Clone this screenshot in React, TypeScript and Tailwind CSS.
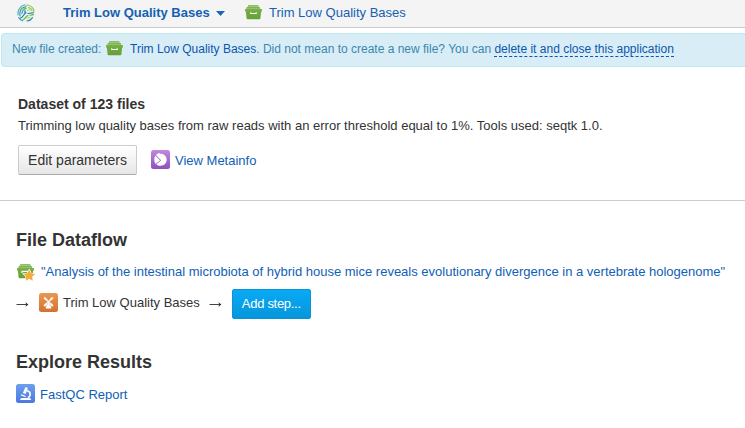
import React from 'react';

function BoxIcon({ starred = false }: { starred?: boolean }) {
  return (
    <svg className="block h-[20px] w-[20px] shrink-0" viewBox="0 0 20 20">
      <defs>
        <linearGradient id="box" x1="0" y1="0" x2="0" y2="1">
          <stop offset="0" stopColor="#78b045" />
          <stop offset="1" stopColor="#659f38" />
        </linearGradient>
      </defs>
      <path d="M3.800 3.200q.2-1 1.200-1h8.500q1 0 1.200 1l1.800 2.800H2z" fill="#a9cf8a" />
      <path d="M3.800 3.200q.2-1 1.200-1h8.500q1 0 1.200 1z" fill="#7fb453" />
      <path d="M2.200 5.400l.8-1.500h12.500l.8 1.500z" fill="#7fb453" />
      <path d="M1 6h17l-.4 3h-.5l-.7 6.200q-.1 1-1.100 1H3.700q-1 0-1.100-1L1.900 9h-.5z" fill="url(#box)" />
      {starred ? (
        <>
          <path d="M6 11V9.300h9" fill="none" stroke="#fff" strokeWidth="1.200" />
          <path d="M13.200 7.800l1.800 3.500 4 .6-2.900 2.800.7 4-3.600-1.900-3.600 1.900.7-4-2.900-2.800 4-.6z" fill="#f6aa3c" stroke="#fff" strokeWidth="1.200" paintOrder="stroke" />
        </>
      ) : (
        <path d="M6.800 9.200v1.300h5.400V9.200" fill="none" stroke="#fff" strokeWidth="1.100" />
      )}
    </svg>
  );
}

function Logo() {
  return (
    <svg className="block h-[18px] w-[18px]" viewBox="0 0 18 18" fill="none" strokeWidth="1.100" strokeLinecap="round">
      <circle cx="9" cy="9" r="8.700" fill="#e4f2ec" />
      <path d="M1 11C.4 6 3.500 1.600 8 .8" stroke="#45b5b4" />
      <path d="M3 12c-.8-4 .7-8 4.500-9M5 9.500c.3-3 1.500-4.500 4-5" stroke="#2b8fc0" />
      <path d="M10 1c3.500.3 6.500 3 7 6.300M11.500 3.500c2 .5 3 1.500 3.500 3" stroke="#8bc34a" />
      <path d="M3.500 14c3-1 3-4 5.500-5.300M11 9.500l5.500-.8M8 6.500V9" stroke="#1976b5" />
      <path d="M6 15.500c2.500-.5 2.500-3 5-4M13 11.200l3.500-.6M9 2l-1 2.500" stroke="#66ae4c" />
      <path d="M10 17c2-.2 4.500-1.500 5.500-3.500M1.700 13.700c1 1.600 2.500 2.600 4 3" stroke="#2b91bb" />
      <path d="M10.500 6.500l2.500-1M10 14l3-.7M5 6.500l1.500-2" stroke="#cbd53c" />
    </svg>
  );
}

function MetainfoIcon() {
  return (
    <svg className="block h-[19px] w-[19px] shrink-0" viewBox="0 0 19 19">
      <defs>
        <linearGradient id="meta" x1="0" y1="0" x2="0" y2="1">
          <stop offset="0" stopColor="#c488e0" />
          <stop offset="1" stopColor="#8d50bd" />
        </linearGradient>
      </defs>
      <rect width="19" height="19" rx="2.500" fill="url(#meta)" />
      <path d="M9.200 10.300L4.500 5.800C2.700 8 2.900 11.500 4.700 14z" fill="#fff" />
      <path d="M5 5.200C5.800 4 7 3.300 8.300 3.100l.5.700c3.800-.5 6.700 2.200 6.900 5.800 0 3.700-2.900 6.400-6.500 6.200-1.600 0-2.700-.5-3.900-1.500L10 10.300z" fill="#fff" />
      <path d="M4.700 5.400l5 4.900-4.800 3.900" fill="none" stroke="#a56bcb" strokeWidth=".5" />
    </svg>
  );
}

function MillIcon() {
  return (
    <svg className="block h-[19px] w-[19px] shrink-0" viewBox="0 0 19 19">
      <defs>
        <linearGradient id="mill" x1="0" y1="0" x2="0" y2="1">
          <stop offset="0" stopColor="#eb9850" />
          <stop offset="1" stopColor="#d27230" />
        </linearGradient>
      </defs>
      <rect width="19" height="19" rx="2.500" fill="url(#mill)" />
      <path d="M9.500 9l2 3.500 1 3H6.500l1-3z" fill="#fff" />
      <path d="M5 4.500l9 8.500M14 4.500L5 13" stroke="#fff" strokeWidth="1.200" />
      <path d="M6 3.700l2.700 2.700-1.500 1.500-2.800-2.700zM14.600 5.200l-2.800 2.700-1.500-1.500L13 3.700zM4.400 12.300l2.800-2.700 1.500 1.500L6 13.800zM13 13.800l-2.700-2.700 1.500-1.500 2.800 2.700z" fill="#fff" stroke="#d98040" strokeWidth=".3" />
    </svg>
  );
}

function MicroscopeIcon() {
  return (
    <svg className="block h-[19px] w-[19px] shrink-0" viewBox="0 0 19 19">
      <defs>
        <linearGradient id="scope" x1="0" y1="0" x2="0" y2="1">
          <stop offset="0" stopColor="#6ba0ed" />
          <stop offset="1" stopColor="#4c78df" />
        </linearGradient>
      </defs>
      <rect width="19" height="19" rx="2.500" fill="url(#scope)" />
      <path d="M9.500 3l2.400.9-2.300 6.200-2.700-1z" fill="#fff" />
      <path d="M11 6.800c3.900.8 4.200 5 1 6.900" fill="none" stroke="#fff" strokeWidth="1.600" />
      <path d="M5 10.800l4.700 1.700" stroke="#fff" strokeWidth="1.300" />
      <path d="M4 15.900q.3-1.800 2-1.800h7.200q1.700 0 2 1.800z" fill="#fff" />
    </svg>
  );
}

function Arrow() {
  return (
    <svg className="block h-[7px] w-[13px] shrink-0" viewBox="0 0 13 7">
      <path d="M.5 3.500h11" stroke="#444" />
      <path d="M9.500 1.300l2.900 2.200-2.900 2.200.6-2.200z" fill="#333" />
    </svg>
  );
}

export default function App() {
  return (
    <div className="h-[428px] w-[745px] overflow-hidden whitespace-nowrap bg-white font-['Liberation_Sans',Arial,sans-serif] text-[13px] leading-[20px] text-[#333]">
      <header className="flex h-[28px] items-center border-b border-[#ccc] bg-[#f4f4f4] pb-[2px] pl-[17px] text-[#1361b3]">
        <Logo />
        <span className="ml-[28px] w-[146px] font-bold">Trim Low Quality Bases</span>
        <svg className="ml-[7px] mt-[2px] h-[5px] w-[9px]" viewBox="0 0 9 5">
          <path d="M0 0h9L4.500 5z" fill="#1b67b5" />
        </svg>
        <span className="ml-[19px]"><BoxIcon /></span>
        <span className="ml-[5px]">Trim Low Quality Bases</span>
      </header>

      <div className="ml-px mt-[5px] flex h-[34px] items-center rounded-l-[4px] border border-r-0 border-[#bce8ee] bg-[#d9edf7] pb-[2px] pl-[10px] text-[12px] text-[#3a87ad]">
        <span className="w-[90px]">New file created:</span>
        <span className="ml-[3px]"><BoxIcon /></span>
        <span className="ml-[5px] text-[#0b57ad]">Trim Low Quality Bases</span>
        <span>. Did not mean to create a new file? You can&nbsp;</span>
        <a className="h-[16px] border-b border-dashed border-[#0b57ad] leading-[16px] text-[#0b57ad]">delete it and close this application</a>
      </div>

      <section className="h-[134px] border-b border-[#ccc] pl-[18px] pt-[27px]">
        <h3 className="text-[14px] font-bold tracking-[0.01px]">Dataset of 123 files</h3>
        <p className="mt-[2px]">Trimming low quality bases from raw reads with an error threshold equal to 1%. Tools used: seqtk 1.0.</p>
        <div className="mt-[9px] flex items-center">
          <button className="h-[30px] w-[119px] rounded-[2px] border border-[#ccc] border-b-[#aaa] bg-linear-to-b from-white to-[#e6e6e6] text-[14px]">Edit parameters</button>
          <span className="-mt-[1px] ml-[14px]"><MetainfoIcon /></span>
          <a className="mt-[2px] ml-[5px] text-[#1060b5]">View Metainfo</a>
        </div>
      </section>

      <section className="pl-[16px] pt-[28px]">
        <h2 className="text-[18px] font-bold leading-[22px]">File Dataflow</h2>
        <div className="mt-[11px] flex h-[20px] items-center">
          <BoxIcon starred />
          <a className="ml-[5px] text-[#1060b5]">"Analysis of the intestinal microbiota of hybrid house mice reveals evolutionary divergence in a vertebrate hologenome"</a>
        </div>
        <div className="mt-[7px] flex h-[30px] items-center">
          <Arrow />
          <span className="-mt-[4px] ml-[10px]"><MillIcon /></span>
          <span className="-mt-[2px] ml-[5px]">Trim Low Quality Bases</span>
          <span className="ml-[9px]"><Arrow /></span>
          <button className="ml-[10px] h-[30px] w-[79px] rounded-[2px] border border-[#0994d8] bg-linear-to-b from-[#08aaf5] to-[#0796dc] text-[13px] tracking-[-0.3px] text-white">Add step...</button>
        </div>
        <h2 className="mt-[32px] text-[18px] font-bold leading-[22px]">Explore Results</h2>
        <div className="mt-[11px] flex h-[20px] items-center">
          <span className="-mt-[1px]"><MicroscopeIcon /></span>
          <a className="mt-[2px] ml-[5px] text-[#1060b5]">FastQC Report</a>
        </div>
      </section>
    </div>
  );
}
